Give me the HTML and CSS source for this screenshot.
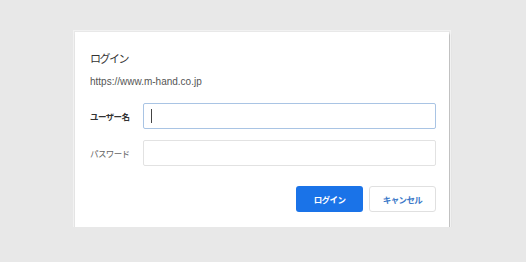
FILE: index.html
```html
<!DOCTYPE html>
<html lang="ja">
<head>
    <meta charset="UTF-8">
    <meta name="viewport" content="width=device-width, initial-scale=1.0">
    <title>ログイン</title>
    <link rel="stylesheet" href="styles.css">
</head>
<body>
    <div class="dialog">
        <h1 class="title">ログイン</h1>
        <p class="origin">https://www.m-hand.co.jp</p>

        <div class="form">
            <label class="label label-active" for="user">ユーザー名</label>
            <div class="input input-focus" id="user"><span class="caret"></span></div>
            <label class="label" for="pass">パスワード</label>
            <div class="input" id="pass"></div>
        </div>

        <div class="actions">
            <button class="btn btn-primary">ログイン</button>
            <button class="btn btn-secondary">キャンセル</button>
        </div>
    </div>
</body>
</html>
```

FILE: styles.css
```css
body {
    margin: 0;
    background: #e8e8e8;
    font-family: "Noto Sans CJK JP", "Noto Sans", Arial, sans-serif;
}
.dialog {
    margin: 32px 0 0 75px;
    width: 374px;
    height: 195px;
    box-sizing: border-box;
    padding: 18px 13px 0 15px;
    background: #fff;
    box-shadow: 1px 2px 2px rgba(0,0,0,0.25);
    outline: 1px solid #f2f2f2;
    outline-offset: 1px;
}
.title {
    margin: 0;
    font-size: 11px;
    line-height: 16px;
    letter-spacing: -1.5px;
    font-weight: normal;
    color: #333;
}
.origin {
    margin: 10px 0 0;
    font-size: 10px;
    line-height: 12px;
    color: #555;
    font-family: "Liberation Sans", Arial, sans-serif;
}
.form {
    margin-top: 15px;
    display: grid;
    grid-template-columns: 53px 1fr;
    row-gap: 11px;
    align-items: center;
}
.label {
    font-size: 8.5px;
    letter-spacing: -0.6px;
    color: #666;
}
.label-active {
    color: #333;
    font-weight: bold;
}
.input {
    height: 26px;
    box-sizing: border-box;
    border: 1px solid #e2e2e2;
    border-radius: 2px;
    display: flex;
    align-items: center;
    padding-left: 7px;
}
.input-focus {
    border-color: #a9c4e4;
}
.caret {
    width: 1px;
    height: 14px;
    background: #444;
}
.actions {
    margin-top: 20px;
    display: flex;
    justify-content: flex-end;
    gap: 6px;
}
.btn {
    width: 67px;
    height: 26px;
    border-radius: 3px;
    font-family: inherit;
    font-size: 8.5px;
    letter-spacing: -0.6px;
    font-weight: bold;
    cursor: pointer;
}
.btn-primary {
    background: #1a73e8;
    color: #fff;
    border: none;
}
.btn-secondary {
    background: #fff;
    color: #3b78c8;
    border: 1px solid #e0e0e0;
}
```
